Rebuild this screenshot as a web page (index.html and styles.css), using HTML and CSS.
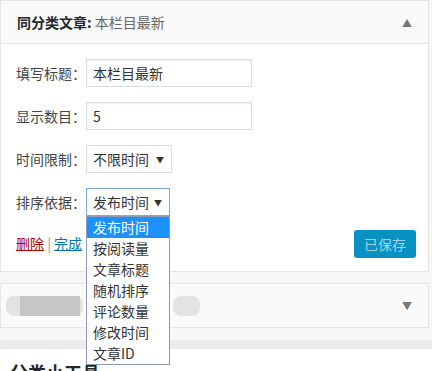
FILE: index.html
```html
<!DOCTYPE html>
<html lang="zh-CN">
<head>
    <meta charset="UTF-8">
    <title>小工具</title>
    <meta name="viewport" content="width=device-width, initial-scale=1">
    <link rel="stylesheet" href="styles.css">
</head>
<body>
<div class="widget">
    <div class="widget-top">
        <h3 class="widget-title">同分类文章:<span class="in-title"> 本栏目最新</span></h3>
        <span class="toggle">&#9650;</span>
    </div>
    <div class="widget-inside">
        <div class="row">
            <label>填写标题：</label>
            <input type="text" class="field" value="本栏目最新">
        </div>
        <div class="row">
            <label>显示数目：</label>
            <input type="text" class="field" value="5">
        </div>
        <div class="row">
            <label>时间限制：</label>
            <div class="select select-time">不限时间<span class="caret">&#9660;</span></div>
        </div>
        <div class="row">
            <label>排序依据：</label>
            <div class="select select-open">发布时间<span class="caret">&#9660;</span>
                <ul class="options">
                    <li class="active">发布时间</li>
                    <li>按阅读量</li>
                    <li>文章标题</li>
                    <li>随机排序</li>
                    <li>评论数量</li>
                    <li>修改时间</li>
                    <li>文章ID</li>
                </ul>
            </div>
        </div>
        <div class="actions">
            <div class="links"><a href="#" class="delete">删除</a> | <a href="#" class="done">完成</a></div>
            <button class="save" disabled>已保存</button>
        </div>
    </div>
</div>
<div class="widget widget-closed">
    <div class="widget-top">
        <div class="blur">
            <span class="pill pill-long"><span class="pill-fill"></span></span>
            <span class="pill pill-short"></span>
        </div>
        <span class="toggle">&#9660;</span>
    </div>
</div>
<div class="band"></div>
<div class="next">
    <h2>分类小工具</h2>
</div>
</body>
</html>
```

FILE: styles.css
```css
body { margin: 0; background: #f7f7f7; font-family: "Noto Sans CJK SC", "Noto Sans", sans-serif; font-size: 14px; color: #333; }
.widget { width: 427px; border: 1px solid #e5e5e5; background: #fff; }
.widget-top { height: 42px; background: #fafafa; border-bottom: 1px solid #e5e5e5; display: flex; align-items: center; justify-content: space-between; padding: 0 16px 0 16px; }
.widget-title { margin: 0; font-size: 14px; font-weight: bold; color: #23282d; }
.in-title { font-weight: normal; color: #666; }
.toggle { font-size: 10px; color: #777; }
.widget-inside { padding: 15px 12px 13px 15px; }
.row { display: flex; align-items: center; margin-bottom: 15px; }
.row label { width: 70px; color: #444; }
.field { width: 166px; height: 28px; box-sizing: border-box; border: 1px solid #ddd; box-shadow: inset 0 1px 2px rgba(0,0,0,0.07); padding: 0 6px; font: inherit; color: #333; }
.select { position: relative; width: 84px; height: 28px; box-sizing: border-box; border: 1px solid #ddd; padding: 0 7px 0 6px; display: flex; align-items: center; justify-content: space-between; color: #333; }
.select-time { width: 86px; }
.caret { font-size: 8px; color: #333; }
.select-open { border-color: #7fa7d3; }
.options { position: absolute; top: 27px; left: -1px; right: -1px; margin: 0; padding: 0; list-style: none; background: #fff; border: 1px solid #8d9bb0; z-index: 2; }
.options li { height: 21px; line-height: 21px; padding-left: 6px; }
.options li.active { background: #1e90ff; color: #fff; }
.actions { display: flex; justify-content: space-between; align-items: flex-start; margin-top: -1px; }
.links { padding-top: 3px; color: #999; }
.links a { text-decoration: underline; }
.delete { color: #a00; }
.done { color: #0073aa; }
.save { width: 62px; height: 28px; border: none; border-radius: 3px; background: #0892c4; color: #9fd3ec; font: inherit; padding: 0; }
.widget-closed { margin-top: 11px; }
.widget-closed .widget-top { height: 43px; border-bottom: none; padding-left: 5px; }
.blur { display: flex; gap: 90px; align-items: center; }
.pill { display: block; height: 20px; border-radius: 8px; background: #e3e3e3; box-sizing: border-box; }
.pill-long { width: 77px; padding-left: 14px; display: flex; align-items: center; }
.pill-fill { display: block; width: 60px; height: 20px; background: #c6c6c6; }
.pill-short { width: 27px; }
.band { height: 9px; margin-top: 12px; background: #ebebeb; }
.next { background: #fff; padding: 10px 10px; }
.next h2 { margin: 0; font-size: 18px; font-weight: bold; color: #23282d; }
```
